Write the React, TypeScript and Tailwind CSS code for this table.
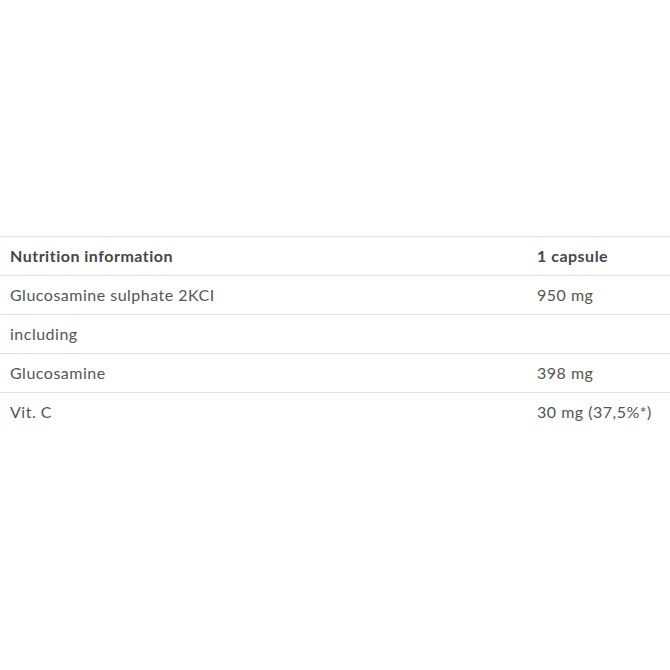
import React from 'react';

const rows: [string, string][] = [
  ['Glucosamine sulphate 2KCI', '950 mg'],
  ['including', ''],
  ['Glucosamine', '398 mg'],
  ['Vit. C', '30 mg (37,5%*)'],
];

export default function App() {
  return (
    <div className="w-[670px] h-[670px] bg-white font-['Lato',sans-serif] text-[16px] tracking-[0.5px] text-[#555]">
      <div className="pt-[236px]">
        {/* Header */}
        <div className="grid grid-cols-[537px_1fr] h-[39px] items-center border-t border-[#e2e2e2] font-bold text-[#474747]">
          <div className="pl-[10px]">Nutrition information</div>
          <div>1 capsule</div>
        </div>
        {rows.map(([name, value]) => (
          <div
            key={name}
            className="grid grid-cols-[537px_1fr] h-[39px] items-center border-t border-[#e2e2e2]"
          >
            <div className="pl-[10px]">{name}</div>
            <div>{value}</div>
          </div>
        ))}
      </div>
    </div>
  );
}
